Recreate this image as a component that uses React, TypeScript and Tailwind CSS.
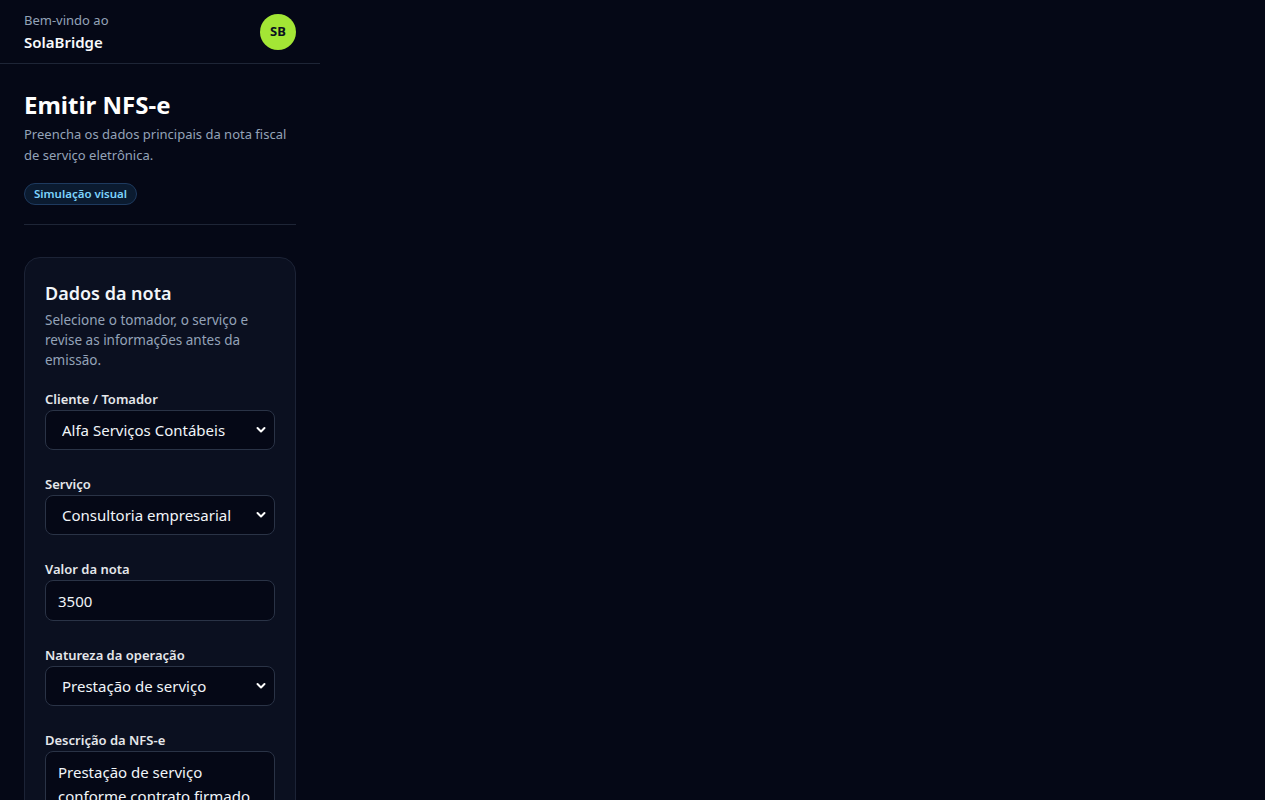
import React from 'react';

const Chevron: React.FC = () => (
    <svg className="pointer-events-none absolute right-[9px] top-1/2 -translate-y-1/2" width="10" height="7" viewBox="0 0 10 7" fill="none">
        <path d="M1.5 1.5 L5 5 L8.5 1.5" stroke="#ffffff" strokeWidth="2" strokeLinecap="round" strokeLinejoin="round" />
    </svg>
);

interface SelectFieldProps {
    label: string;
    value: string;
}

const SelectField: React.FC<SelectFieldProps> = ({ label, value }) => (
    <div>
        <label className="block text-[13px] leading-5 font-semibold text-[#e5e7eb] mb-px">{label}</label>
        <div className="relative">
            <select
                defaultValue={value}
                className="w-full h-10 appearance-none rounded-lg border border-[#2a3346] bg-[#050816] pl-4 pr-8 text-[15px] text-[#f1f5f9] outline-none"
            >
                <option value={value}>{value}</option>
            </select>
            <Chevron />
        </div>
    </div>
);

export default function App() {
    return (
        <div className="min-h-screen bg-[#050816] text-white" style={{ fontFamily: '"Noto Sans", "Open Sans", sans-serif' }}>
            <aside className="w-[320px]">
                <header className="h-[64px] flex items-center justify-between px-6 border-b border-[#1e2536]">
                    <div className="-mt-px">
                        <p className="text-[13px] leading-5 text-[#94a3b8]">Bem-vindo ao</p>
                        <p className="text-[15px] leading-5 font-semibold text-[#f8fafc] mt-0.5">SolaBridge</p>
                    </div>
                    <div className="w-9 h-9 rounded-full bg-[#a3e635] flex items-center justify-center text-[13px] font-bold text-[#0b1020]">
                        SB
                    </div>
                </header>

                <main className="px-6 pt-[25px]">
                    <h1 className="text-[24px] leading-8 font-bold text-white">Emitir NFS-e</h1>
                    <p className="mt-[3px] text-[13px] leading-[21px] text-[#94a3b8]">
                        Preencha os dados principais da nota fiscal de serviço eletrônica.
                    </p>
                    <div className="mt-[17px] flex">
                        <span className="flex h-[22px] items-center rounded-full border border-[#1e3a5f] bg-[#0b1b30] px-[9px] text-[11.5px] font-semibold text-[#7dd3fc]">
                            Simulação visual
                        </span>
                    </div>
                    <div className="mt-[19px] border-t border-[#1e2536]" />

                    <section className="mt-8 rounded-2xl border border-[#1c2336] bg-[#0b1020] px-5 pt-[21px] pb-6">
                        <h2 className="text-[18px] leading-7 font-semibold text-[#f1f5f9]">Dados da nota</h2>
                        <p className="mt-[3px] text-[13.5px] leading-5 text-[#94a3b8]">
                            Selecione o tomador, o serviço e revise as informações antes da emissão.
                        </p>

                        <div className="mt-[19px] space-y-6">
                            <SelectField label="Cliente / Tomador" value="Alfa Serviços Contábeis" />
                            <SelectField label="Serviço" value="Consultoria empresarial" />
                            <div>
                                <label className="block text-[13px] leading-5 font-semibold text-[#e5e7eb] mb-px">Valor da nota</label>
                                <input
                                    defaultValue="3500"
                                    className="w-full h-[41px] rounded-lg border border-[#2a3346] bg-[#050816] px-3 text-[15px] text-[#f1f5f9] outline-none"
                                />
                            </div>
                            <SelectField label="Natureza da operação" value="Prestação de serviço" />
                            <div>
                                <label className="block text-[13px] leading-5 font-semibold text-[#e5e7eb] mb-px">Descrição da NFS-e</label>
                                <textarea
                                    rows={4}
                                    defaultValue="Prestação de serviço conforme contrato firmado entre as partes."
                                    className="w-full resize-none rounded-lg border border-[#2a3346] bg-[#050816] px-3 py-2 text-[15px] leading-6 text-[#f1f5f9] outline-none"
                                />
                            </div>
                        </div>
                    </section>
                </main>
            </aside>
        </div>
    );
}
